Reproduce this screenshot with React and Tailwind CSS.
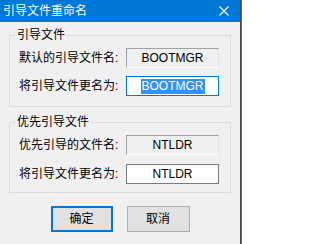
import React from "react";

const font = { fontFamily: '"Liberation Sans", "Noto Sans CJK SC", sans-serif' };

function Row({ label, children, className = "" }) {
  return (
    <div className={"flex items-center pl-[9px] " + className}>
      <div className="w-[107px] text-[12px] leading-[16px] text-black whitespace-nowrap">{label}</div>
      {children}
    </div>
  );
}

function ReadOnlyField({ value }) {
  return (
    <div className="w-[93px] h-[20px] flex items-center justify-center bg-[#f0f0f0] border border-[#a0a0a0] border-b-white border-r-[#e3e3e3] text-[12px] text-black">
      {value}
    </div>
  );
}

function EditField({ value, focused }) {
  return (
    <div
      className={
        "w-[93px] h-[20px] flex items-center justify-center bg-white border text-[12px] " +
        (focused ? "border-[#0078d7]" : "border-[#7a7a7a]")
      }
    >
      {focused ? (
        <span className="bg-[#3390ff] text-white leading-[15px] px-px">{value}</span>
      ) : (
        <span className="text-black">{value}</span>
      )}
    </div>
  );
}

function Group({ title, children, className = "" }) {
  return (
    <fieldset className={"ml-[9px] w-[222px] border border-[#dcdcdc] pb-[10px] " + className}>
      <legend className="ml-[5px] px-[2px] text-[12px] leading-[16px] text-black">{title}</legend>
      {children}
    </fieldset>
  );
}

export default function App() {
  return (
    <div className="flex w-[242px] h-[244px]" style={font}>
      <div className="w-[240px] h-full flex flex-col bg-[#f0f0f0]">
        <div className="h-[22px] bg-[#0078d7] flex items-center justify-between pl-[3px] pr-[11px]">
          <span className="text-white text-[12px] leading-[16px]">引导文件重命名</span>
          <svg width="10" height="10" viewBox="0 0 10 10" className="block">
            <path d="M0.5 0.5 L9.5 9.5 M9.5 0.5 L0.5 9.5" stroke="white" strokeWidth="1.1" fill="none" />
          </svg>
        </div>
        <div className="pt-[5px] flex flex-col">
          <Group title="引导文件">
            <Row label="默认的引导文件名:" className="mt-[5px]">
              <ReadOnlyField value="BOOTMGR" />
            </Row>
            <Row label="将引导文件更名为:" className="mt-[8px]">
              <EditField value="BOOTMGR" focused />
            </Row>
          </Group>
          <Group title="优先引导文件" className="mt-[7px] !pb-[8px]">
            <Row label="优先引导的文件名:" className="mt-[5px]">
              <ReadOnlyField value="NTLDR" />
            </Row>
            <Row label="将引导文件更名为:" className="mt-[9px]">
              <EditField value="NTLDR" />
            </Row>
          </Group>
          <div className="flex justify-center gap-[14px] mt-[13px]">
            <button className="w-[62px] h-[26px] bg-[#e1e1e1] border-2 border-[#0078d7] text-[12px] text-black">
              确定
            </button>
            <button className="w-[63px] h-[26px] bg-[#e1e1e1] border border-[#adadad] text-[12px] text-black">
              取消
            </button>
          </div>
        </div>
      </div>
      <div className="w-px h-full bg-[#4a4a4a]" />
      <div className="w-px h-full bg-[#2e8b5f]" />
    </div>
  );
}
